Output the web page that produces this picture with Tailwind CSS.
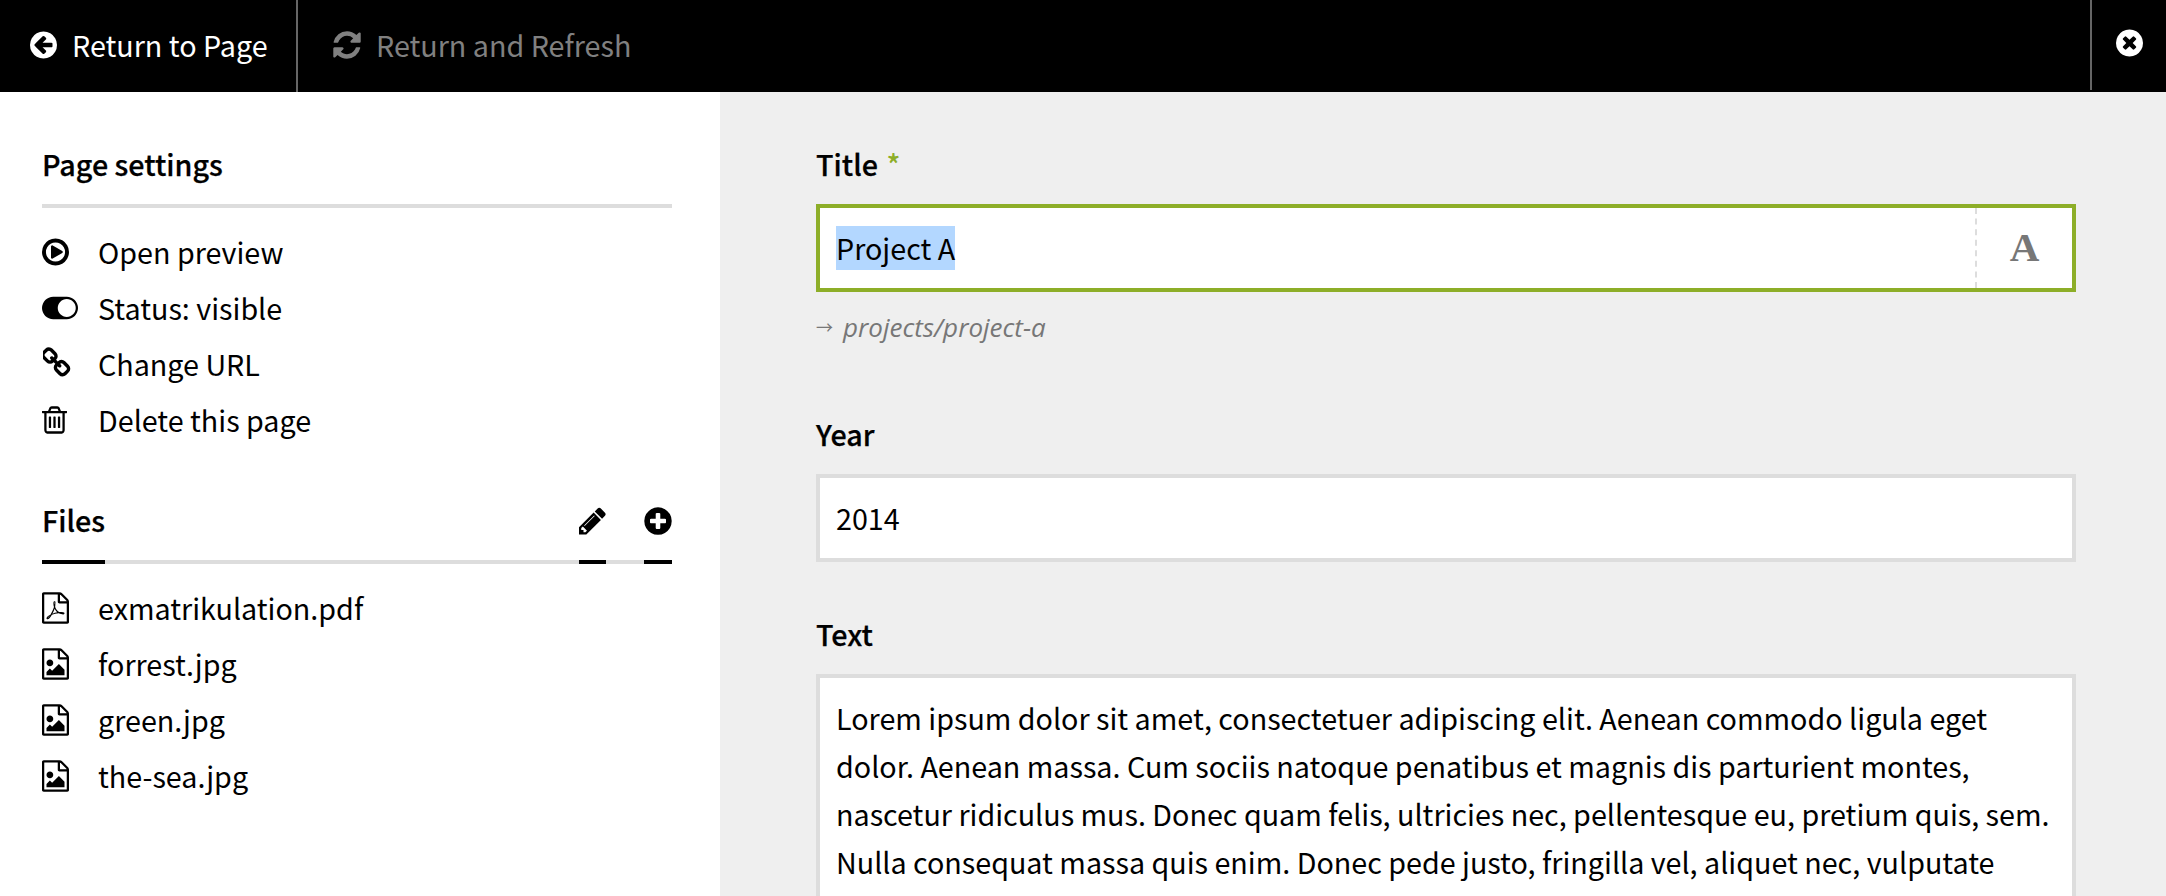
<!DOCTYPE html>
<html lang="en">
<head>
<meta charset="utf-8">
<title>Panel</title>
<script src="https://cdn.jsdelivr.net/npm/@tailwindcss/browser@4"></script>
</head>
<body class="m-0 h-[896px] overflow-hidden bg-white text-black font-['Noto_Sans_CJK_SC','Noto_Sans',sans-serif] text-[28.7px]">
<header class="flex h-[92px] bg-black">
  <a class="flex items-center pl-[30px] pr-[30px] pb-[3px] w-[298px] border-r-2 border-[#666] text-white">
    <svg class="w-[27px] h-[32px] shrink-0 fill-current" viewBox="128 0 1536 1792"><path d="M1408 960v-128q0-26-19-45t-45-19h-502l189-189q19-19 19-45t-19-45l-91-91q-18-18-45-18t-45 18l-362 362-91 91q-18 18-18 45t18 45l91 91 362 362q18 18 45 18t45-18l91-91q18-18 18-45t-18-45l-189-189h502q26 0 45-19t19-45zm256-64q0 209-103 385.500t-279.500 279.500-385.500 103-385.500-103-279.500-279.500-103-385.500 103-385.500 279.500-279.500 385.500-103 385.500 103 279.500 279.500 103 385.500z"/></svg>
    <span class="ml-[15px] whitespace-nowrap">Return to Page</span>
  </a>
  <a class="flex items-center pl-[35px] pb-[3px] text-[#808080]">
    <svg class="w-[28px] h-[32px] shrink-0 fill-current" viewBox="128 0 1536 1792"><path d="M1639 1056q0 5-1 7-64 268-268 434.500t-478 166.500q-146 0-282.500-55t-243.500-157l-129 129q-19 19-45 19t-45-19-19-45v-448q0-26 19-45t45-19h448q26 0 45 19t19 45-19 45l-137 137q71 66 161 102t187 36q134 0 250-65t186-179q11-17 53-117 8-23 30-23h192q13 0 22.500 9.500t9.500 22.500zm25-800v448q0 26-19 45t-45 19h-448q-26 0-45-19t-19-45 19-45l138-138q-148-137-349-137-134 0-250 65t-186 179q-11 17-53 117-8 23-30 23h-199q-13 0-22.500-9.500t-9.500-22.500v-7q65-268 270-434.500t480-166.500q146 0 284 55.500t245 156.500l130-129q19-19 45-19t45 19 19 45z"/></svg>
    <span class="ml-[15px] whitespace-nowrap">Return and Refresh</span>
  </a>
  <a class="ml-auto flex items-center justify-center w-[76px] h-[90px] pb-[4px] border-l-2 border-[#666] text-white">
    <svg class="w-[27px] h-[32px] shrink-0 fill-current" viewBox="128 0 1536 1792"><path d="M1277 1122q0-26-19-45l-181-181 181-181q19-19 19-45 0-27-19-46l-90-90q-19-19-46-19-26 0-45 19l-181 181-181-181q-19-19-45-19-27 0-46 19l-90 90q-19 19-19 46 0 26 19 45l181 181-181 181q-19 19-19 45 0 27 19 46l90 90q19 19 46 19 26 0 45-19l181-181 181 181q19 19 45 19 27 0 46-19l90-90q19-19 19-46zm387-226q0 209-103 385.500t-279.500 279.500-385.500 103-385.500-103-279.500-279.500-103-385.500 103-385.500 279.500-279.500 385.500-103 385.500 103 279.500 279.500 103 385.500z"/></svg>
  </a>
</header>
<div class="flex h-[804px]">
  <aside class="w-[720px] shrink-0 bg-white px-[42px] pr-[48px]">
    <h2 class="mt-[52px] pb-[20px] border-b-4 border-[#ddd] border-solid font-medium leading-[40px] [-webkit-text-stroke:0.25px_black]">Page settings</h2>
    <ul class="mt-[17px]">
      <li class="flex items-center h-[56px]">
        <span class="w-[56px] shrink-0 flex pb-[3px]"><svg class="w-[27px] h-[32px] fill-current" viewBox="128 0 1536 1792"><path d="M1312 896q0 37-32 55l-544 320q-15 9-32 9-16 0-32-8-32-19-32-56v-640q0-37 32-56 33-18 64 1l544 320q32 18 32 55zm128 0q0-148-73-273t-198-198-273-73-273 73-198 198-73 273 73 273 198 198 273 73 273-73 198-198 73-273zm224 0q0 209-103 385.500t-279.500 279.500-385.500 103-385.500-103-279.500-279.500-103-385.500 103-385.500 279.500-279.500 385.500-103 385.500 103 279.500 279.500 103 385.500z"/></svg></span>
        <span class="pb-[2px]">Open preview</span>
      </li>
      <li class="flex items-center h-[56px]">
        <span class="w-[56px] shrink-0 flex pb-[3px]"><svg class="w-[36px] h-[32px] fill-current" viewBox="0 0 2048 1792"><path d="M0 896q0-130 51-248.500t136.500-204 204-136.500 248.500-51h768q130 0 248.500 51t204 136.500 136.500 204 51 248.500-51 248.500-136.500 204-204 136.500-248.500 51h-768q-130 0-248.500-51t-204-136.500-136.500-204-51-248.500zm1408 512q104 0 198.500-40.500t163.500-109.500 109.500-163.500 40.500-198.500-40.500-198.500-109.500-163.500-163.500-109.500-198.500-40.500-198.500 40.500-163.500 109.500-109.500 163.500-40.500 198.500 40.500 198.500 109.500 163.500 163.500 109.500 198.500 40.500z"/></svg></span>
        <span class="pb-[2px]">Status: visible</span>
      </li>
      <li class="flex items-center h-[56px]">
        <span class="w-[56px] shrink-0 flex pl-[1px] pb-[4px]"><svg class="w-[30px] h-[32px] fill-current" viewBox="128 0 1664 1792"><path d="M1456 1216q0-40-28-68l-208-208q-28-28-68-28-42 0-72 32 3 3 19 18.500t21.500 21.500 15 19 13 25.500 3.500 27.500q0 40-28 68t-68 28q-15 0-27.500-3.500t-25.500-13-19-15-21.500-21.500-18.500-19q-33 31-33 73 0 40 28 68l206 207q27 27 68 27 40 0 68-26l147-146q28-28 28-67zm-703-705q0-40-28-68l-206-207q-28-28-68-28-39 0-68 27l-147 146q-28 28-28 67 0 40 28 68l208 208q27 27 68 27 42 0 72-31-3-3-19-18.500t-21.500-21.500-15-19-13-25.500-3.500-27.500q0-40 28-68t68-28q15 0 27.500 3.500t25.500 13 19 15 21.500 21.500 18.500 19q33-31 33-73zm895 705q0 120-85 203l-147 146q-83 83-203 83-121 0-204-85l-206-207q-83-83-83-203 0-123 88-209l-88-88q-86 88-208 88-120 0-204-84l-208-208q-84-84-84-204t85-203l147-146q83-83 203-83 121 0 204 85l206 207q83 83 83 203 0 123-88 209l88 88q86-88 208-88 120 0 204 84l208 208q84 84 84 204z"/></svg></span>
        <span class="pb-[2px]">Change URL</span>
      </li>
      <li class="flex items-center h-[56px]">
        <span class="w-[56px] shrink-0 flex pb-[3px]"><svg class="w-[25px] h-[32px] fill-current" viewBox="192 0 1408 1792"><path d="M704 736v576q0 14-9 23t-23 9h-64q-14 0-23-9t-9-23v-576q0-14 9-23t23-9h64q14 0 23 9t9 23zm256 0v576q0 14-9 23t-23 9h-64q-14 0-23-9t-9-23v-576q0-14 9-23t23-9h64q14 0 23 9t9 23zm256 0v576q0 14-9 23t-23 9h-64q-14 0-23-9t-9-23v-576q0-14 9-23t23-9h64q14 0 23 9t9 23zm128 724v-948h-896v948q0 22 7 40.500t14.500 27 10.500 8.500h832q3 0 10.500-8.500t14.500-27 7-40.500zm-672-1076h448l-48-117q-7-9-17-11h-317q-10 2-17 11zm928 32v64q0 14-9 23t-23 9h-96v948q0 83-47 143.500t-113 60.500h-832q-66 0-113-58.500t-47-141.500v-952h-96q-14 0-23-9t-9-23v-64q0-14 9-23t23-9h309l70-167q15-37 54-63t79-26h320q40 0 79 26t54 63l70 167h309q14 0 23 9t9 23z"/></svg></span>
        <span class="pb-[2px]">Delete this page</span>
      </li>
    </ul>
    <div class="mt-[52px] flex items-stretch border-b-4 border-[#ddd]">
      <h2 class="-mt-[1px] pb-[20px] -mb-[4px] border-b-4 border-black font-medium leading-[40px] [-webkit-text-stroke:0.25px_black]">Files</h2>
      <a class="ml-auto flex items-start pt-[4px] w-[27px] -mb-[4px] border-b-4 border-black"><svg class="w-[27px] h-[32px] shrink-0 fill-current" viewBox="128 0 1536 1792"><path d="M491 1536l91-91-235-235-91 91v107h128v128h107zm523-928q0-22-22-22-10 0-17 7l-542 542q-7 7-7 17 0 22 22 22 10 0 17-7l542-542q7-7 7-17zm-54-192l416 416-832 832h-416v-416zm683 96q0 53-37 90l-166 166-416-416 166-165q36-38 90-38 53 0 91 38l235 234q37 39 37 91z"/></svg></a>
      <a class="ml-[38px] flex items-start pt-[4px] w-[28px] -mb-[4px] border-b-4 border-black"><svg class="w-[28px] h-[32px] shrink-0 fill-current" viewBox="128 0 1536 1792"><path d="M1344 960v-128q0-26-19-45t-45-19h-256v-256q0-26-19-45t-45-19h-128q-26 0-45 19t-19 45v256h-256q-26 0-45 19t-19 45v128q0 26 19 45t45 19h256v256q0 26 19 45t45 19h128q26 0 45-19t19-45v-256h256q26 0 45-19t19-45zm320-64q0 209-103 385.500t-279.500 279.500-385.500 103-385.500-103-279.500-279.500-103-385.500 103-385.500 279.500-279.500 385.500-103 385.500 103 279.500 279.500 103 385.500z"/></svg></a>
    </div>
    <ul class="mt-[17px]">
      <li class="flex items-center h-[56px]">
        <span class="w-[56px] shrink-0 flex pb-[3px]"><svg class="w-[27px] h-[32px] fill-current" viewBox="128 0 1536 1792"><path d="M1596 380q28 28 48 76t20 88v1152q0 40-28 68t-68 28h-1344q-40 0-68-28t-28-68v-1600q0-40 28-68t68-28h896q40 0 88 20t76 48zm-444-244v376h376q-10-29-22-41l-313-313q-12-12-41-22zm384 1528v-1024h-416q-40 0-68-28t-28-68v-416h-768v1536h1280zm-514-593q33 26 84 56 59-7 117-7 147 0 177 49 16 22 2 52 0 1-1 2l-2 2v1q-6 38-71 38-48 0-115-20t-130-53q-221 24-392 83-153 262-242 262-15 0-28-7l-24-12q-1-1-6-5-10-10-6-36 9-40 56-91.500t132-96.500q14-9 23 6 2 2 2 4 52-85 107-197 68-136 104-262-24-82-30.500-159.500t6.500-127.500q11-40 42-40h22q23 0 35 15 18 21 9 68-2 6-4 8 1 3 1 8v30q-2 123-14 192 55 164 146 238zm-576 411q52-24 137-158-51 40-87.500 84t-49.500 74zm398-920q-15 42-2 132 1-7 7-44 0-3 7-43 1-4 4-8-1-1-1-2-1-2-1-3-1-22-13-36 0 1-1 2v2zm-124 661q135-54 284-81-2-1-13-9.500t-16-13.500q-76-67-127-176-27 86-83 197-30 56-45 83zm646-16q-24-24-140-24 76 28 124 28 14 0 18-1 0-1-2-3z"/></svg></span>
        <span class="pb-[2px]">exmatrikulation.pdf</span>
      </li>
      <li class="flex items-center h-[56px]">
        <span class="w-[56px] shrink-0 flex pb-[3px]"><svg class="w-[27px] h-[32px] fill-current" viewBox="128 0 1536 1792"><path d="M1596 380q28 28 48 76t20 88v1152q0 40-28 68t-68 28h-1344q-40 0-68-28t-28-68v-1600q0-40 28-68t68-28h896q40 0 88 20t76 48zm-444-244v376h376q-10-29-22-41l-313-313q-12-12-41-22zm384 1528v-1024h-416q-40 0-68-28t-28-68v-416h-768v1536h1280zm-128-448v320h-1024v-192l192-192 128 128 384-384zm-832-192q-80 0-136-56t-56-136 56-136 136-56 136 56 56 136-56 136-136 56z"/></svg></span>
        <span class="pb-[2px]">forrest.jpg</span>
      </li>
      <li class="flex items-center h-[56px]">
        <span class="w-[56px] shrink-0 flex pb-[3px]"><svg class="w-[27px] h-[32px] fill-current" viewBox="128 0 1536 1792"><path d="M1596 380q28 28 48 76t20 88v1152q0 40-28 68t-68 28h-1344q-40 0-68-28t-28-68v-1600q0-40 28-68t68-28h896q40 0 88 20t76 48zm-444-244v376h376q-10-29-22-41l-313-313q-12-12-41-22zm384 1528v-1024h-416q-40 0-68-28t-28-68v-416h-768v1536h1280zm-128-448v320h-1024v-192l192-192 128 128 384-384zm-832-192q-80 0-136-56t-56-136 56-136 136-56 136 56 56 136-56 136-136 56z"/></svg></span>
        <span class="pb-[2px]">green.jpg</span>
      </li>
      <li class="flex items-center h-[56px]">
        <span class="w-[56px] shrink-0 flex pb-[3px]"><svg class="w-[27px] h-[32px] fill-current" viewBox="128 0 1536 1792"><path d="M1596 380q28 28 48 76t20 88v1152q0 40-28 68t-68 28h-1344q-40 0-68-28t-28-68v-1600q0-40 28-68t68-28h896q40 0 88 20t76 48zm-444-244v376h376q-10-29-22-41l-313-313q-12-12-41-22zm384 1528v-1024h-416q-40 0-68-28t-28-68v-416h-768v1536h1280zm-128-448v320h-1024v-192l192-192 128 128 384-384zm-832-192q-80 0-136-56t-56-136 56-136 136-56 136 56 56 136-56 136-136 56z"/></svg></span>
        <span class="pb-[2px]">the-sea.jpg</span>
      </li>
    </ul>
  </aside>
  <main class="flex-1 bg-[#efefef] pl-[96px] pr-[90px] overflow-hidden">
    <div class="mt-[52px] pb-[20px] font-medium leading-[40px] [-webkit-text-stroke:0.25px_black]">Title <span class="text-[#8dae28] ml-[2px] [-webkit-text-stroke:0]">*</span></div>
    <div class="flex h-[88px] border-4 border-[#8dae28] bg-white">
      <div class="flex-1 flex items-center pl-[16px]"><span class="bg-[#b3d7ff] leading-[44px]">Project A</span></div>
      <div class="w-[97px] flex items-center justify-center border-l-2 border-dashed border-[#ddd] text-[#777] font-['Liberation_Serif',serif] font-bold text-[41px]">A</div>
    </div>
    <div class="mt-[15px] h-[40px] flex items-center text-[#777]">
      <span class="w-[27px] shrink-0 text-[17px]">→</span>
      <span class="italic text-[26px] font-['Open_Sans',sans-serif]">projects/project-a</span>
    </div>
    <div class="mt-[67px] pb-[20px] font-medium leading-[40px] [-webkit-text-stroke:0.25px_black]">Year</div>
    <div class="flex items-center h-[88px] border-4 border-[#ddd] bg-white pl-[16px]">2014</div>
    <div class="mt-[52px] pb-[20px] font-medium leading-[40px] [-webkit-text-stroke:0.25px_black]">Text</div>
    <div class="h-[400px] border-4 border-[#ddd] bg-white pl-[16px] pr-[16px] pt-[16px] leading-[48px]">Lorem ipsum dolor sit amet, consectetuer adipiscing elit. Aenean commodo ligula eget dolor. Aenean massa. Cum sociis natoque penatibus et magnis dis parturient montes, nascetur ridiculus mus. Donec quam felis, ultricies nec, pellentesque eu, pretium quis, sem. Nulla consequat massa quis enim. Donec pede justo, fringilla vel, aliquet nec, vulputate</div>
  </main>
</div>
</body>
</html>
